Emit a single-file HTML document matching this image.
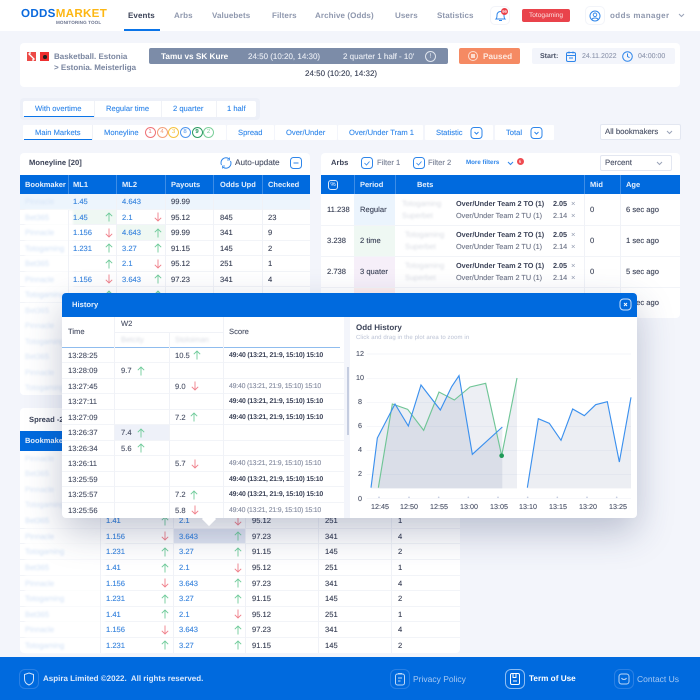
<!DOCTYPE html>
<html><head><meta charset="utf-8"><title>Odds Market</title>
<style>
*{box-sizing:border-box}
html,body{margin:0;padding:0}
body{width:700px;height:700px;overflow:hidden;position:relative;background:#f3f5fb;font-family:"Liberation Sans",sans-serif;font-size:7.6px;color:#3c4358;letter-spacing:0;text-rendering:geometricPrecision}
.a,.t,.r span,.r b,.r i,.r svg{position:absolute}
.t{white-space:nowrap;line-height:10px}
.w{background:#fff;border-radius:4px}
.nav{font-size:8px;color:#8f98ae;top:11px;font-weight:bold;letter-spacing:.1px}
.tb{color:#2f86ea;top:104px;font-size:7.6px;-webkit-text-stroke:.1px #2f86ea}
.tc{color:#2f86ea;top:127.500px;font-size:7.6px;-webkit-text-stroke:.1px #2f86ea}
.r{position:absolute;height:15.5px;line-height:15px;border-bottom:1px solid #f2f4f8;white-space:nowrap;font-size:7.6px}
.r span,.r b,.r i{font-style:normal;font-weight:normal;-webkit-text-stroke:.12px}
.ml{left:20px;width:290px}.sp{left:20px;width:440px}
.n{left:5px;color:#d9e6f7;filter:blur(1.1px);background:#fff;width:100%}
.ml .c1{left:53px}.ml .c2{left:102px}.ml .c3{left:151px}.ml .c4{left:200px}.ml .c5{left:248px}
.ml .a1{left:84.5px}.ml .a2{left:133.5px}
.sp .c1{left:86px}.sp .c2{left:159px}.sp .c3{left:232px}.sp .c4{left:305px}.sp .c5{left:378px}
.sp .a1{left:141px}.sp .a2{left:214px}
.r b{color:#3b86de}
.r svg{top:2.5px;width:8px;height:10px}
.u{stroke:#6fcb9a;fill:none;stroke-width:.9}
.d{stroke:#ef7f8a;fill:none;stroke-width:.9}
.hd{background:#006ade;color:#e8f1fc;font-size:7.5px;font-weight:bold}
.v{position:absolute;width:1px;background:#f0f2f7}
.vb{position:absolute;width:1px;background:#3d8de6}
.bl{filter:blur(1.1px);color:#d8dbe2}
.h{left:62px;width:282px;color:#4a5166}
.h span{top:0}
.h .s{left:167px;font-weight:bold;color:#3c4358;font-size:6.9px;letter-spacing:-.2px;-webkit-text-stroke:0}
.h .g{left:167px;color:#858ca0;font-weight:normal;font-size:6.9px;letter-spacing:-.2px}
.h .x{left:113px}.h .y{left:59px}.h .tm{left:6px}
.cr{position:absolute;width:11px;height:11px;border-radius:50%;top:127px;font-size:6px;line-height:9px;text-align:center;border:1px solid;background:#fff}
.ax{font-size:7.2px;color:#4a5166;-webkit-text-stroke:.1px}
.ft{color:#a5c8f3;top:674px;font-size:8.5px}
.ob{font-weight:bold;font-size:7.3px;letter-spacing:-.05px}
.og{color:#6c7386;font-size:7.3px;letter-spacing:0;-webkit-text-stroke:.1px}
.q{-webkit-text-stroke:.12px}
</style></head><body>
<svg width="0" height="0" style="position:absolute"><defs>
<symbol id="up" viewBox="0 0 8 10"><path class="u" d="M4 9.5V1M.8 4.2L4 1l3.2 3.2"/></symbol>
<symbol id="dn" viewBox="0 0 8 10"><path class="d" d="M4 .5V9M.8 5.8L4 9l3.2-3.2"/></symbol>
</defs></svg>

<!-- NAV -->
<div class="a" style="left:0;top:0;width:700px;height:31px;background:#fff"></div>
<div class="t" style="left:21px;top:8px;font-size:11.6px;font-weight:bold;letter-spacing:.3px;line-height:12px"><span style="color:#0a69dd">ODDS</span><span style="color:#fdb714">MARKET</span></div>
<div class="t" style="left:56px;top:17.500px;font-size:4.6px;font-weight:bold;color:#6d7690;letter-spacing:.1px">MONITORING TOOL</div>
<div class="t nav" style="left:128px;color:#3c4358">Events</div>
<div class="a" style="left:124px;top:29px;width:36px;height:2px;background:#0a74e8"></div>
<div class="t nav" style="left:174px">Arbs</div>
<div class="t nav" style="left:212px">Valuebets</div>
<div class="t nav" style="left:272px">Filters</div>
<div class="t nav" style="left:315px">Archive (Odds)</div>
<div class="t nav" style="left:395px">Users</div>
<div class="t nav" style="left:437px">Statistics</div>
<div class="a" style="left:490px;top:6px;width:20px;height:19px;border:1px solid #f2f4f9;border-radius:5px"></div>
<svg class="a" style="left:494px;top:9px" width="13" height="13" viewBox="0 0 13 13"><path d="M2 10c1-1 1-2 1-4 0-2 1.500-3.500 3.500-3.500S10 4 10 6c0 2 0 3 1 4zM5 11.500h3" fill="none" stroke="#2f86ea"/></svg>
<div class="a" style="left:501px;top:8px;width:7px;height:7px;border-radius:50%;background:#ea3f48;color:#fff;font-size:4px;line-height:7px;text-align:center;font-weight:bold">99</div>
<div class="a" style="left:522px;top:9px;width:48px;height:13px;background:#e9434b;border-radius:2px;color:#fbdcdc;font-size:6.6px;line-height:13px;text-align:center">Totogaming</div>
<div class="a" style="left:585px;top:6px;width:20px;height:19px;border:1px solid #f2f4f9;border-radius:5px"></div>
<svg class="a" style="left:589px;top:10px" width="12" height="12" viewBox="0 0 12 12"><circle cx="6" cy="6" r="5" fill="none" stroke="#2f86ea"/><circle cx="6" cy="4.800" r="1.800" fill="none" stroke="#2f86ea" stroke-width=".9"/><path d="M2.800 9.500c1-2 5.400-2 6.400 0" fill="none" stroke="#2f86ea" stroke-width=".9"/></svg>
<div class="t nav" style="left:610px;letter-spacing:.4px">odds manager</div>
<svg class="a" style="left:678px;top:13px" width="7" height="5" viewBox="0 0 7 5"><path d="M1 1l2.500 2.500L6 1" fill="none" stroke="#9aa3b8"/></svg>

<!-- EVENT CARD -->
<div class="a w" style="left:20px;top:43px;width:660px;height:44px"></div>
<div class="a" style="left:27px;top:52px;width:9px;height:9px;background:#ec4a46"></div>
<svg class="a" style="left:27px;top:52px" width="9" height="9" viewBox="0 0 9 9"><path d="M1.500 1.500l6 6M2 1h2M5 8h2" stroke="#fff" stroke-width="1.300"/></svg>
<div class="a" style="left:40px;top:52px;width:9px;height:9px;background:#ee2f2f"></div>
<div class="a" style="left:43px;top:55px;width:3.500px;height:3.500px;background:#222;border-radius:50%"></div>
<div class="t" style="left:54px;top:51.500px;color:#7a86a0;font-size:8px;font-weight:bold">Basketball. Estonia</div>
<div class="t" style="left:54px;top:63px;color:#7a86a0;font-size:8px;font-weight:bold">&gt; Estonia. Meisterliga</div>
<div class="a" style="left:149px;top:48px;width:299px;height:16px;background:#7c8ca8;border-radius:2px"></div>
<div class="t" style="left:161px;top:51.500px;color:#fff;font-weight:bold;font-size:8.200px">Tamu vs SK Kure</div>
<div class="t q" style="left:248px;top:51.500px;color:#e6eaf2;font-size:8px">24:50 (10:20, 14:30)</div>
<div class="t q" style="left:343px;top:51.500px;color:#e6eaf2;font-size:8px">2 quarter 1 half - 10'</div>
<div class="a" style="left:425px;top:51px;width:11px;height:11px;border:1px solid #dfe4ed;border-radius:50%;color:#e6eaf2;font-size:7px;line-height:9px;text-align:center">!</div>
<div class="t q" style="left:305px;top:69px;color:#3c4358;font-size:8px">24:50 (10:20, 14:32)</div>
<div class="a" style="left:459px;top:48px;width:61px;height:16px;background:#f58a63;border-radius:2px"></div>
<div class="a" style="left:468px;top:51px;width:10px;height:10px;border:1px solid #fcdccf;border-radius:50%"></div>
<div class="a" style="left:471px;top:54px;width:4px;height:4px;background:#fcdccf"></div>
<div class="t" style="left:483px;top:51.500px;color:#fde8df;font-size:8.200px;font-weight:bold">Paused</div>
<div class="a" style="left:532px;top:48px;width:143px;height:16px;background:#f3f5fb;border-radius:2px"></div>
<div class="t" style="left:540px;top:51.500px;font-size:7px;font-weight:bold;color:#4a5166">Start:</div>
<svg class="a" style="left:566px;top:51px" width="11" height="11" viewBox="0 0 11 11"><rect x=".5" y="1.500" width="9" height="9" rx="1.500" fill="none" stroke="#2f86ea"/><path d="M.5 4.500h9M3 .5v2M7 .5v2M3 7h4" stroke="#2f86ea" fill="none"/></svg>
<div class="t q" style="left:582px;top:51.500px;font-size:7px;color:#929ab0">24.11.2022</div>
<svg class="a" style="left:622px;top:51px" width="11" height="11" viewBox="0 0 11 11"><circle cx="5.500" cy="5.500" r="4.800" fill="none" stroke="#2f86ea"/><path d="M5.500 2.500v3l2 1.200" fill="none" stroke="#2f86ea"/></svg>
<div class="t q" style="left:638px;top:51.500px;font-size:7px;color:#929ab0">04:00:00</div>

<!-- TABS -->
<div class="a" style="left:20px;top:98px;width:240px;height:22px;background:#edf0f8;border-radius:4px"></div>
<div class="a w" style="left:23px;top:101px;width:233px;height:16px;border-radius:2px"></div>
<div class="v" style="left:94px;top:101px;height:16px"></div><div class="v" style="left:161px;top:101px;height:16px"></div><div class="v" style="left:216px;top:101px;height:16px"></div>
<div class="a" style="left:24px;top:116px;width:70px;height:1px;background:#0a74e8"></div>
<div class="t tb" style="left:35px">With overtime</div>
<div class="t tb" style="left:106px">Regular time</div>
<div class="t tb" style="left:173px">2 quarter</div>
<div class="t tb" style="left:227px">1 half</div>

<div class="a w" style="left:23px;top:125px;width:203px;height:15px;border-radius:1px"></div>
<div class="v" style="left:92px;top:125px;height:15px"></div>
<div class="a" style="left:24px;top:139px;width:68px;height:1px;background:#0a74e8"></div>
<div class="t tc" style="left:35px">Main Markets</div>
<div class="t tc" style="left:104px">Moneyline</div>
<div class="cr" style="left:144.500px;color:#ef7277;border-color:#ef7277">1</div>
<div class="cr" style="left:156.500px;color:#f3a07c;border-color:#f3a07c">4</div>
<div class="cr" style="left:168px;color:#f5c23f;border-color:#f5c23f">3</div>
<div class="cr" style="left:179.500px;color:#4e95ee;border-color:#4e95ee">8</div>
<div class="cr" style="left:191.500px;color:#2b9b62;border-color:#2b9b62;font-weight:bold">9</div>
<div class="cr" style="left:203px;color:#7ccf9a;border-color:#7ccf9a">2</div>
<div class="a w" style="left:227px;top:125px;width:47px;height:15px;border-radius:1px"></div>
<div class="a w" style="left:275px;top:125px;width:62px;height:15px;border-radius:1px"></div>
<div class="a w" style="left:338px;top:125px;width:85px;height:15px;border-radius:1px"></div>
<div class="a w" style="left:425px;top:125px;width:68px;height:15px;border-radius:1px"></div>
<div class="a w" style="left:495px;top:125px;width:59px;height:15px;border-radius:1px"></div>
<div class="t tc" style="left:238px">Spread</div>
<div class="t tc" style="left:286px">Over/Under</div>
<div class="t tc" style="left:349px">Over/Under Tram 1</div>
<div class="t tc" style="left:436px">Statistic</div>
<div class="t tc" style="left:506px">Total</div>
<svg class="a" style="left:470px;top:127px" width="13" height="12" viewBox="0 0 13 12"><rect x="1" y=".5" width="11" height="11" rx="3" fill="#fff" stroke="#2f86ea"/><path d="M4.500 5l2 2 2-2" fill="none" stroke="#2f86ea"/></svg>
<svg class="a" style="left:530px;top:127px" width="13" height="12" viewBox="0 0 13 12"><rect x="1" y=".5" width="11" height="11" rx="3" fill="#fff" stroke="#2f86ea"/><path d="M4.500 5l2 2 2-2" fill="none" stroke="#2f86ea"/></svg>
<div class="a" style="left:600px;top:124px;width:81px;height:16px;background:#fff;border:1px solid #e3e7f1;border-radius:2px"></div>
<div class="t q" style="left:605px;top:127px;font-size:7.800px;color:#4a5166">All bookmakers</div>
<svg class="a" style="left:666px;top:130px" width="7" height="5" viewBox="0 0 7 5"><path d="M1 1l2.500 2.500L6 1" fill="none" stroke="#9aa3b8"/></svg>

<!-- MONEYLINE -->
<div class="a w" style="left:20px;top:153px;width:290px;height:242px"></div>
<div class="t" style="left:29px;top:158px;font-weight:bold;font-size:7.600px;color:#3c4358">Moneyline [20]</div>
<svg class="a" style="left:220px;top:157px" width="12" height="12" viewBox="0 0 12 12"><path d="M1.500 8A5 5 0 0 1 9 1.800M10.500 4A5 5 0 0 1 3 10.200" fill="none" stroke="#2f86ea"/><path d="M9.500.5v2.500H7M2.500 11.500V9H5" fill="none" stroke="#2f86ea" stroke-width=".8"/></svg>
<div class="t q" style="left:235px;top:158px;font-size:8.200px;color:#4a5166">Auto-update</div>
<svg class="a" style="left:290px;top:157px" width="12" height="12" viewBox="0 0 12 12"><rect x=".5" y=".5" width="11" height="11" rx="3" fill="none" stroke="#2f86ea"/><path d="M3.500 6h5" stroke="#2f86ea"/></svg>
<div class="a hd" style="left:20px;top:175px;width:290px;height:19px"></div>
<div class="vb" style="left:68px;top:175px;height:19px"></div><div class="vb" style="left:116px;top:175px;height:19px"></div><div class="vb" style="left:165px;top:175px;height:19px"></div><div class="vb" style="left:213px;top:175px;height:19px"></div><div class="vb" style="left:262px;top:175px;height:19px"></div>
<div class="t hd" style="left:25px;top:180px;background:none">Bookmaker</div>
<div class="t hd" style="left:73px;top:180px;background:none">ML1</div>
<div class="t hd" style="left:122px;top:180px;background:none">ML2</div>
<div class="t hd" style="left:171px;top:180px;background:none">Payouts</div>
<div class="t hd" style="left:220px;top:180px;background:none">Odds Upd</div>
<div class="t hd" style="left:268px;top:180px;background:none">Checked</div>

<div class="r ml" style="top:194.300px;background:#edf5fd"><i class="n" style="background:none">Pinnacle</i><b class="c1">1.45</b><b class="c2">4.643</b><span class="c3">99.99</span></div>
<div class="a" style="left:68px;top:210px;width:48px;height:15px;background:#eff8f3"></div>
<div class="r ml" style="top:209.800px"><i class="n" style="width:48px">Bet365</i><b class="c1">1.45</b><svg class="a1"><use href="#up"/></svg><b class="c2">2.1</b><svg class="a2"><use href="#dn"/></svg><span class="c3">95.12</span><span class="c4">845</span><span class="c5">23</span></div>
<div class="a" style="left:117px;top:225px;width:48px;height:15.500px;background:#eff8f3"></div>
<div class="r ml" style="top:225.300px"><i class="n" style="width:48px">Pinnacle</i><b class="c1">1.156</b><svg class="a1"><use href="#dn"/></svg><b class="c2">4.643</b><svg class="a2"><use href="#up"/></svg><span class="c3">99.99</span><span class="c4">341</span><span class="c5">9</span></div>
<div class="r ml" style="top:240.800px"><i class="n" style="width:48px">Totogaming</i><b class="c1">1.231</b><svg class="a1"><use href="#up"/></svg><b class="c2">3.27</b><svg class="a2"><use href="#up"/></svg><span class="c3">91.15</span><span class="c4">145</span><span class="c5">2</span></div>
<div class="r ml" style="top:256.300px"><i class="n" style="width:48px">Bet365</i><svg class="a1"><use href="#up"/></svg><b class="c2">2.1</b><svg class="a2"><use href="#dn"/></svg><span class="c3">95.12</span><span class="c4">251</span><span class="c5">1</span></div>
<div class="r ml" style="top:271.800px"><i class="n" style="width:48px">Pinnacle</i><b class="c1">1.156</b><svg class="a1"><use href="#dn"/></svg><b class="c2">3.643</b><svg class="a2"><use href="#up"/></svg><span class="c3">97.23</span><span class="c4">341</span><span class="c5">4</span></div>
<div class="r ml" style="top:287.300px"><i class="n" style="width:48px">Totogaming</i><svg class="a1"><use href="#up"/></svg><svg class="a2"><use href="#up"/></svg></div>
<div class="v" style="left:68px;top:210px;height:85px"></div><div class="v" style="left:116px;top:194px;height:100px"></div><div class="v" style="left:165px;top:194px;height:100px"></div><div class="v" style="left:213px;top:194px;height:100px"></div><div class="v" style="left:262px;top:194px;height:100px"></div>
<div class="t bl" style="left:25px;top:306px;color:#d9e6f7">Bet365</div>
<div class="t bl" style="left:25px;top:321px;color:#d9e6f7">Pinnacle</div>
<div class="t bl" style="left:25px;top:337px;color:#d9e6f7">Totogaming</div>
<div class="t bl" style="left:25px;top:352px;color:#d9e6f7">Bet365</div>
<div class="t bl" style="left:25px;top:368px;color:#d9e6f7">Pinnacle</div>
<div class="t bl" style="left:25px;top:383px;color:#d9e6f7">Totogaming</div>

<!-- ARBS -->
<div class="a w" style="left:321px;top:153px;width:359px;height:165px"></div>
<div class="t" style="left:331px;top:158px;font-weight:bold;color:#3c4358;font-size:7.600px">Arbs</div>
<svg class="a" style="left:361px;top:157px" width="12" height="12" viewBox="0 0 12 12"><rect x=".5" y=".5" width="11" height="11" rx="3" fill="none" stroke="#2f86ea"/><path d="M3.500 6l2 2 3-3.500" fill="none" stroke="#2f86ea" stroke-width=".8"/></svg>
<div class="t q" style="left:377px;top:158px;color:#7a8296;font-size:7.600px">Filter 1</div>
<svg class="a" style="left:413px;top:157px" width="12" height="12" viewBox="0 0 12 12"><rect x=".5" y=".5" width="11" height="11" rx="3" fill="none" stroke="#2f86ea"/><path d="M3.500 6l2 2 3-3.500" fill="none" stroke="#2f86ea" stroke-width=".8"/></svg>
<div class="t q" style="left:428px;top:158px;color:#7a8296;font-size:7.600px">Filter 2</div>
<div class="t" style="left:466px;top:158px;color:#2f86ea;font-weight:bold;font-size:6.200px">More filters</div>
<svg class="a" style="left:507px;top:161px" width="7" height="5" viewBox="0 0 7 5"><path d="M1 1l2.500 2.500L6 1" fill="none" stroke="#2f86ea"/></svg>
<div class="a" style="left:516.500px;top:157.500px;width:7px;height:7px;border-radius:50%;background:#ef4a50;color:#fff;font-size:4.500px;line-height:7px;text-align:center">6</div>
<div class="a" style="left:600px;top:155px;width:72px;height:16px;background:#fff;border:1px solid #e3e7f1;border-radius:2px"></div>
<div class="t q" style="left:605px;top:158px;font-size:7.800px;color:#4a5166">Percent</div>
<svg class="a" style="left:656px;top:161px" width="7" height="5" viewBox="0 0 7 5"><path d="M1 1l2.500 2.500L6 1" fill="none" stroke="#9aa3b8"/></svg>
<div class="a hd" style="left:321px;top:175px;width:359px;height:19px"></div>
<div class="vb" style="left:354px;top:175px;height:19px"></div><div class="vb" style="left:395px;top:175px;height:19px"></div><div class="vb" style="left:584px;top:175px;height:19px"></div><div class="vb" style="left:620px;top:175px;height:19px"></div>
<div class="a" style="left:328px;top:180px;width:10px;height:10px;border:1px solid #dbe9fb;border-radius:3px;color:#fff;font-size:6px;line-height:8px;text-align:center">%</div>
<div class="t hd" style="left:360px;top:180px;background:none">Period</div>
<div class="t hd" style="left:417px;top:180px;background:none">Bets</div>
<div class="t hd" style="left:590px;top:180px;background:none">Mid</div>
<div class="t hd" style="left:626px;top:180px;background:none">Age</div>

<div class="a" style="left:354px;top:194px;width:41px;height:31px;background:#ebf4fd"></div>
<div class="a" style="left:354px;top:225px;width:41px;height:31px;background:#eff8f3"></div>
<div class="a" style="left:354px;top:256px;width:41px;height:31px;background:#f6eff9"></div>
<div class="a" style="left:354px;top:287px;width:41px;height:31px;background:#fdeeee"></div>
<div class="a" style="left:321px;top:225px;width:359px;height:1px;background:#f2f4f8"></div>
<div class="a" style="left:321px;top:256px;width:359px;height:1px;background:#f2f4f8"></div>
<div class="a" style="left:321px;top:287px;width:359px;height:1px;background:#f2f4f8"></div>
<div class="v" style="left:584px;top:194px;height:124px"></div><div class="v" style="left:620px;top:194px;height:124px"></div>

<div class="t q" style="left:327px;top:205px">11.238</div><div class="t q" style="left:360px;top:205px">Regular</div>
<div class="t bl" style="left:402px;top:199px">Totogaming</div><div class="t bl" style="left:402px;top:211px">Superbet</div>
<div class="t ob" style="left:456px;top:199px">Over/Under Team 2 TO (1)</div><div class="t og" style="left:456px;top:211px">Over/Under Team 2 TU (1)</div>
<div class="t ob" style="left:553px;top:199px">2.05</div><div class="t og" style="left:553px;top:211px">2.14</div>
<div class="t" style="left:571px;top:199px;color:#8f98ae">×</div><div class="t" style="left:571px;top:211px;color:#8f98ae">×</div>
<div class="t q" style="left:590px;top:205px">0</div><div class="t q" style="left:626px;top:205px">6 sec ago</div>

<div class="t q" style="left:327px;top:236px">3.238</div><div class="t q" style="left:360px;top:236px">2 time</div>
<div class="t bl" style="left:405px;top:230px">Totogaming</div><div class="t bl" style="left:405px;top:242px">Superbet</div>
<div class="t ob" style="left:456px;top:230px">Over/Under Team 2 TO (1)</div><div class="t og" style="left:456px;top:242px">Over/Under Team 2 TU (1)</div>
<div class="t ob" style="left:553px;top:230px">2.05</div><div class="t og" style="left:553px;top:242px">2.14</div>
<div class="t" style="left:571px;top:230px;color:#8f98ae">×</div><div class="t" style="left:571px;top:242px;color:#8f98ae">×</div>
<div class="t q" style="left:590px;top:236px">0</div><div class="t q" style="left:626px;top:236px">1 sec ago</div>

<div class="t q" style="left:327px;top:267px">2.738</div><div class="t q" style="left:360px;top:267px">3 quater</div>
<div class="t bl" style="left:405px;top:261px">Totogaming</div><div class="t bl" style="left:405px;top:273px">Superbet</div>
<div class="t ob" style="left:456px;top:261px">Over/Under Team 2 TO (1)</div><div class="t og" style="left:456px;top:273px">Over/Under Team 2 TU (1)</div>
<div class="t ob" style="left:553px;top:261px">2.05</div><div class="t og" style="left:553px;top:273px">2.14</div>
<div class="t" style="left:571px;top:261px;color:#8f98ae">×</div><div class="t" style="left:571px;top:273px;color:#8f98ae">×</div>
<div class="t q" style="left:590px;top:267px">0</div><div class="t q" style="left:626px;top:267px">5 sec ago</div>
<div class="t q" style="left:626px;top:298px">5 sec ago</div>

<!-- SPREAD -->
<div class="a w" style="left:20px;top:408px;width:440px;height:245px"></div>
<div class="t" style="left:29px;top:415px;font-weight:bold;font-size:7.600px">Spread -2.5</div>
<div class="a hd" style="left:20px;top:431px;width:440px;height:20px"></div>
<div class="t hd" style="left:25px;top:436px;background:none">Bookmaker</div>
<div class="t bl" style="left:25px;top:454px;color:#d9e6f7">Pinnacle</div>
<div class="t bl" style="left:25px;top:469px;color:#d9e6f7">Bet365</div>
<div class="t bl" style="left:25px;top:485px;color:#d9e6f7">Pinnacle</div>
<div class="t bl" style="left:25px;top:500px;color:#d9e6f7">Totogaming</div>
<div class="a" style="left:173px;top:528px;width:72px;height:16px;background:#dfe4f1"></div>
<div class="r sp" style="top:513.200px"><i class="n" style="width:80px">Bet365</i><b class="c1">1.41</b><svg class="a1"><use href="#up"/></svg><b class="c2">2.1</b><svg class="a2"><use href="#dn"/></svg><span class="c3">95.12</span><span class="c4">251</span><span class="c5">1</span></div>
<div class="r sp" style="top:528.800px"><i class="n" style="width:80px">Pinnacle</i><b class="c1">1.156</b><svg class="a1"><use href="#dn"/></svg><b class="c2">3.643</b><svg class="a2"><use href="#up"/></svg><span class="c3">97.23</span><span class="c4">341</span><span class="c5">4</span></div>
<div class="r sp" style="top:544.300px"><i class="n" style="width:80px">Totogaming</i><b class="c1">1.231</b><svg class="a1"><use href="#up"/></svg><b class="c2">3.27</b><svg class="a2"><use href="#up"/></svg><span class="c3">91.15</span><span class="c4">145</span><span class="c5">2</span></div>
<div class="r sp" style="top:560px"><i class="n" style="width:80px">Bet365</i><b class="c1">1.41</b><svg class="a1"><use href="#up"/></svg><b class="c2">2.1</b><svg class="a2"><use href="#dn"/></svg><span class="c3">95.12</span><span class="c4">251</span><span class="c5">1</span></div>
<div class="r sp" style="top:575.500px"><i class="n" style="width:80px">Pinnacle</i><b class="c1">1.156</b><svg class="a1"><use href="#dn"/></svg><b class="c2">3.643</b><svg class="a2"><use href="#up"/></svg><span class="c3">97.23</span><span class="c4">341</span><span class="c5">4</span></div>
<div class="r sp" style="top:591px"><i class="n" style="width:80px">Totogaming</i><b class="c1">1.231</b><svg class="a1"><use href="#up"/></svg><b class="c2">3.27</b><svg class="a2"><use href="#up"/></svg><span class="c3">91.15</span><span class="c4">145</span><span class="c5">2</span></div>
<div class="r sp" style="top:606.700px"><i class="n" style="width:80px">Bet365</i><b class="c1">1.41</b><svg class="a1"><use href="#up"/></svg><b class="c2">2.1</b><svg class="a2"><use href="#dn"/></svg><span class="c3">95.12</span><span class="c4">251</span><span class="c5">1</span></div>
<div class="r sp" style="top:622.300px"><i class="n" style="width:80px">Pinnacle</i><b class="c1">1.156</b><svg class="a1"><use href="#dn"/></svg><b class="c2">3.643</b><svg class="a2"><use href="#up"/></svg><span class="c3">97.23</span><span class="c4">341</span><span class="c5">4</span></div>
<div class="r sp" style="top:637.800px;border-bottom:0"><i class="n" style="width:80px">Totogaming</i><b class="c1">1.231</b><svg class="a1"><use href="#up"/></svg><b class="c2">3.27</b><svg class="a2"><use href="#up"/></svg><span class="c3">91.15</span><span class="c4">145</span><span class="c5">2</span></div>
<div class="v" style="left:100px;top:513px;height:140px"></div><div class="v" style="left:173px;top:513px;height:140px"></div><div class="v" style="left:245px;top:513px;height:140px"></div><div class="v" style="left:318px;top:513px;height:140px"></div><div class="v" style="left:391px;top:513px;height:140px"></div>

<!-- MODAL -->
<div class="a" style="left:62px;top:293px;width:575px;height:225px;background:#fff;border-radius:4px;box-shadow:0 14px 36px rgba(40,55,100,.28)"></div>
<div class="a" style="left:204px;top:514px;width:10px;height:10px;background:#fff;transform:rotate(45deg)"></div>
<div class="a" style="left:62px;top:293px;width:575px;height:24px;background:#006ade;border-radius:4px 4px 0 0"></div>
<div class="t" style="left:72px;top:300px;color:#e8f1fc;font-size:7.600px;font-weight:bold">History</div>
<svg class="a" style="left:619px;top:298px" width="13" height="13" viewBox="0 0 13 13"><rect x="1" y="1" width="11" height="11" rx="3.500" fill="none" stroke="#cfe2fa"/><path d="M5 5l3 3M8 5l-3 3" stroke="#fff"/></svg>
<div class="t q" style="left:68px;top:327px;color:#4a5166">Time</div>
<div class="t q" style="left:121px;top:319px;color:#4a5166">W2</div>
<div class="t bl" style="left:121px;top:335px">Betcity</div>
<div class="t bl" style="left:175px;top:335px">Stoloiman</div>
<div class="t q" style="left:229px;top:327px;color:#4a5166">Score</div>
<div class="a" style="left:114px;top:332px;width:109px;height:1px;background:#f0f2f7"></div>
<div class="a" style="left:62px;top:347px;width:278px;height:1px;background:#8fbcee"></div>
<div class="a" style="left:114px;top:425px;width:55px;height:15.500px;background:#eef1f9"></div>

<div class="r h" style="top:347.500px"><span class="tm">13:28:25</span><span class="x">10.5</span><svg style="left:131px"><use href="#up"/></svg><span class="s">49:40 (13:21, 21:9, 15:10) 15:10</span></div>
<div class="r h" style="top:363px"><span class="tm">13:28:09</span><span class="y">9.7</span><svg style="left:75px"><use href="#up"/></svg></div>
<div class="r h" style="top:378.500px"><span class="tm">13:27:45</span><span class="x">9.0</span><svg style="left:129px"><use href="#dn"/></svg><span class="g">49:40 (13:21, 21:9, 15:10) 15:10</span></div>
<div class="r h" style="top:394px"><span class="tm">13:27:11</span><span class="s">49:40 (13:21, 21:9, 15:10) 15:10</span></div>
<div class="r h" style="top:409.500px"><span class="tm">13:27:09</span><span class="x">7.2</span><svg style="left:128px"><use href="#up"/></svg><span class="s">49:40 (13:21, 21:9, 15:10) 15:10</span></div>
<div class="r h" style="top:425px"><span class="tm">13:26:37</span><span class="y">7.4</span><svg style="left:75px"><use href="#up"/></svg></div>
<div class="r h" style="top:440.500px"><span class="tm">13:26:34</span><span class="y">5.6</span><svg style="left:75px"><use href="#up"/></svg></div>
<div class="r h" style="top:456px"><span class="tm">13:26:11</span><span class="x">5.7</span><svg style="left:129px"><use href="#dn"/></svg><span class="g">49:40 (13:21, 21:9, 15:10) 15:10</span></div>
<div class="r h" style="top:471.500px"><span class="tm">13:25:59</span><span class="s">49:40 (13:21, 21:9, 15:10) 15:10</span></div>
<div class="r h" style="top:487px"><span class="tm">13:25:57</span><span class="x">7.2</span><svg style="left:128px"><use href="#up"/></svg><span class="s">49:40 (13:21, 21:9, 15:10) 15:10</span></div>
<div class="r h" style="top:502.500px;border-bottom:0"><span class="tm">13:25:56</span><span class="x">5.8</span><svg style="left:129px"><use href="#dn"/></svg><span class="g">49:40 (13:21, 21:9, 15:10) 15:10</span></div>
<div class="v" style="left:114px;top:317px;height:201px"></div><div class="v" style="left:169px;top:332px;height:186px"></div><div class="v" style="left:223px;top:317px;height:201px"></div>
<div class="a" style="left:344px;top:317px;width:6px;height:201px;background:#f3f5fb"></div>
<div class="a" style="left:347px;top:367px;width:2px;height:68px;background:#c5cde0"></div>

<div class="t" style="left:356px;top:323px;font-size:8px;font-weight:bold;color:#3c4358">Odd History</div>
<div class="t" style="left:356px;top:333px;font-size:6px;color:#bcc3d5;letter-spacing:.1px">Click and drag in the plot area to zoom in</div>
<svg class="a" style="left:345px;top:290px" width="300" height="240" viewBox="0 0 900 720">
<g stroke="#f0f2f8" stroke-width="2"><path d="M65 192H858M65 265H858M65 337H858M65 409H858M65 481H858M65 553H858M65 625H858"/></g>
<g fill="#c5cce0"><circle cx="102" cy="622" r="2.500"/><circle cx="192" cy="622" r="2.500"/><circle cx="281" cy="622" r="2.500"/><circle cx="370" cy="622" r="2.500"/><circle cx="459" cy="622" r="2.500"/><circle cx="548" cy="622" r="2.500"/><circle cx="637" cy="622" r="2.500"/><circle cx="726" cy="622" r="2.500"/><circle cx="815" cy="622" r="2.500"/></g>
<path d="M78 595L97 444 150 342 190 408 228 285 286 360 320 290 342 257 382 493 472 411V595Z" fill="#7f8fb0" fill-opacity=".17"/>
<path d="M100 595L142 342 188 358 236 421 282 306 328 330 375 291 422 280 470 497 516 264V595Z" fill="#7f8fb0" fill-opacity=".14"/>
<path d="M547 595L580 386 613 400 648 451 683 357 718 377 752 344 787 335 823 516 858 322V595Z" fill="#7f8fb0" fill-opacity=".15"/>
<path d="M100 593L142 342 188 358 236 421 282 306 328 330 375 291 422 280 470 497 516 264" fill="none" stroke="#6fc596" stroke-width="3.400"/>
<path d="M78 593L97 444 150 342 190 408 228 285 286 360 320 290 342 257 382 493 472 411" fill="none" stroke="#3b90ee" stroke-width="3.400"/>
<path d="M547 593L580 386 613 400 648 451 683 357 718 377 752 344 787 335 823 516 858 322" fill="none" stroke="#3b90ee" stroke-width="3.400"/>
<circle cx="470" cy="497" r="7" fill="#1f9a57"/>
</svg>
<div class="t ax" style="left:356px;top:349px">12</div><div class="t ax" style="left:356px;top:373px">10</div><div class="t ax" style="left:358px;top:397px">8</div><div class="t ax" style="left:358px;top:421px">6</div><div class="t ax" style="left:358px;top:445px">4</div><div class="t ax" style="left:358px;top:469px">2</div><div class="t ax" style="left:358px;top:494px">0</div>
<div class="t ax" style="left:371px;top:502px">12:45</div><div class="t ax" style="left:400px;top:502px">12:50</div><div class="t ax" style="left:430px;top:502px">12:55</div><div class="t ax" style="left:460px;top:502px">13:00</div><div class="t ax" style="left:490px;top:502px">13:05</div><div class="t ax" style="left:519px;top:502px">13:10</div><div class="t ax" style="left:549px;top:502px">13:15</div><div class="t ax" style="left:579px;top:502px">13:20</div><div class="t ax" style="left:609px;top:502px">13:25</div>

<!-- FOOTER -->
<div class="a" style="left:0;top:657px;width:700px;height:43px;background:#006ade"></div>
<div class="a" style="left:19px;top:669px;width:20px;height:20px;border:1px solid #2a80e4;border-radius:6px"></div>
<svg class="a" style="left:23px;top:672px" width="12" height="14" viewBox="0 0 12 14"><path d="M6 1l4.500 1.500V7c0 3-2 5-4.500 6C3.500 12 1.500 10 1.500 7V2.500z" fill="none" stroke="#cfe2fa"/></svg>
<div class="t" style="left:43px;top:674px;color:#dbe9fb;font-weight:bold;font-size:8px">Aspira Limited ©2022.&nbsp; All rights reserved.</div>
<div class="a" style="left:390px;top:669px;width:20px;height:20px;border:1px solid #2a80e4;border-radius:6px"></div>
<svg class="a" style="left:394px;top:672px" width="12" height="14" viewBox="0 0 12 14"><rect x="1.500" y="2" width="9" height="11" rx="2" fill="none" stroke="#bcd7f7"/><path d="M4 1.500h4M4 6h4M4 9h2.500" stroke="#bcd7f7"/></svg>
<div class="t ft" style="left:413px">Privacy Policy</div>
<div class="a" style="left:505px;top:669px;width:20px;height:20px;border:1px solid #8dbdf3;border-radius:6px"></div>
<svg class="a" style="left:509px;top:672px" width="12" height="14" viewBox="0 0 12 14"><rect x="1.500" y="1.500" width="9" height="11" rx="1.500" fill="none" stroke="#fff"/><path d="M4 1.500v4h3v-4M4 9h4" stroke="#fff" fill="none"/></svg>
<div class="t ft" style="left:529px;color:#fff;font-weight:bold;font-size:8.200px">Term of Use</div>
<div class="a" style="left:614px;top:669px;width:20px;height:20px;border:1px solid #2a80e4;border-radius:6px"></div>
<svg class="a" style="left:618px;top:673px" width="12" height="12" viewBox="0 0 12 12"><rect x="1" y="1" width="10" height="10" rx="2.500" fill="none" stroke="#bcd7f7"/><path d="M3.500 5c1 2 4 2 5 0" fill="none" stroke="#bcd7f7"/></svg>
<div class="t ft" style="left:637px">Contact Us</div>
</body></html>
